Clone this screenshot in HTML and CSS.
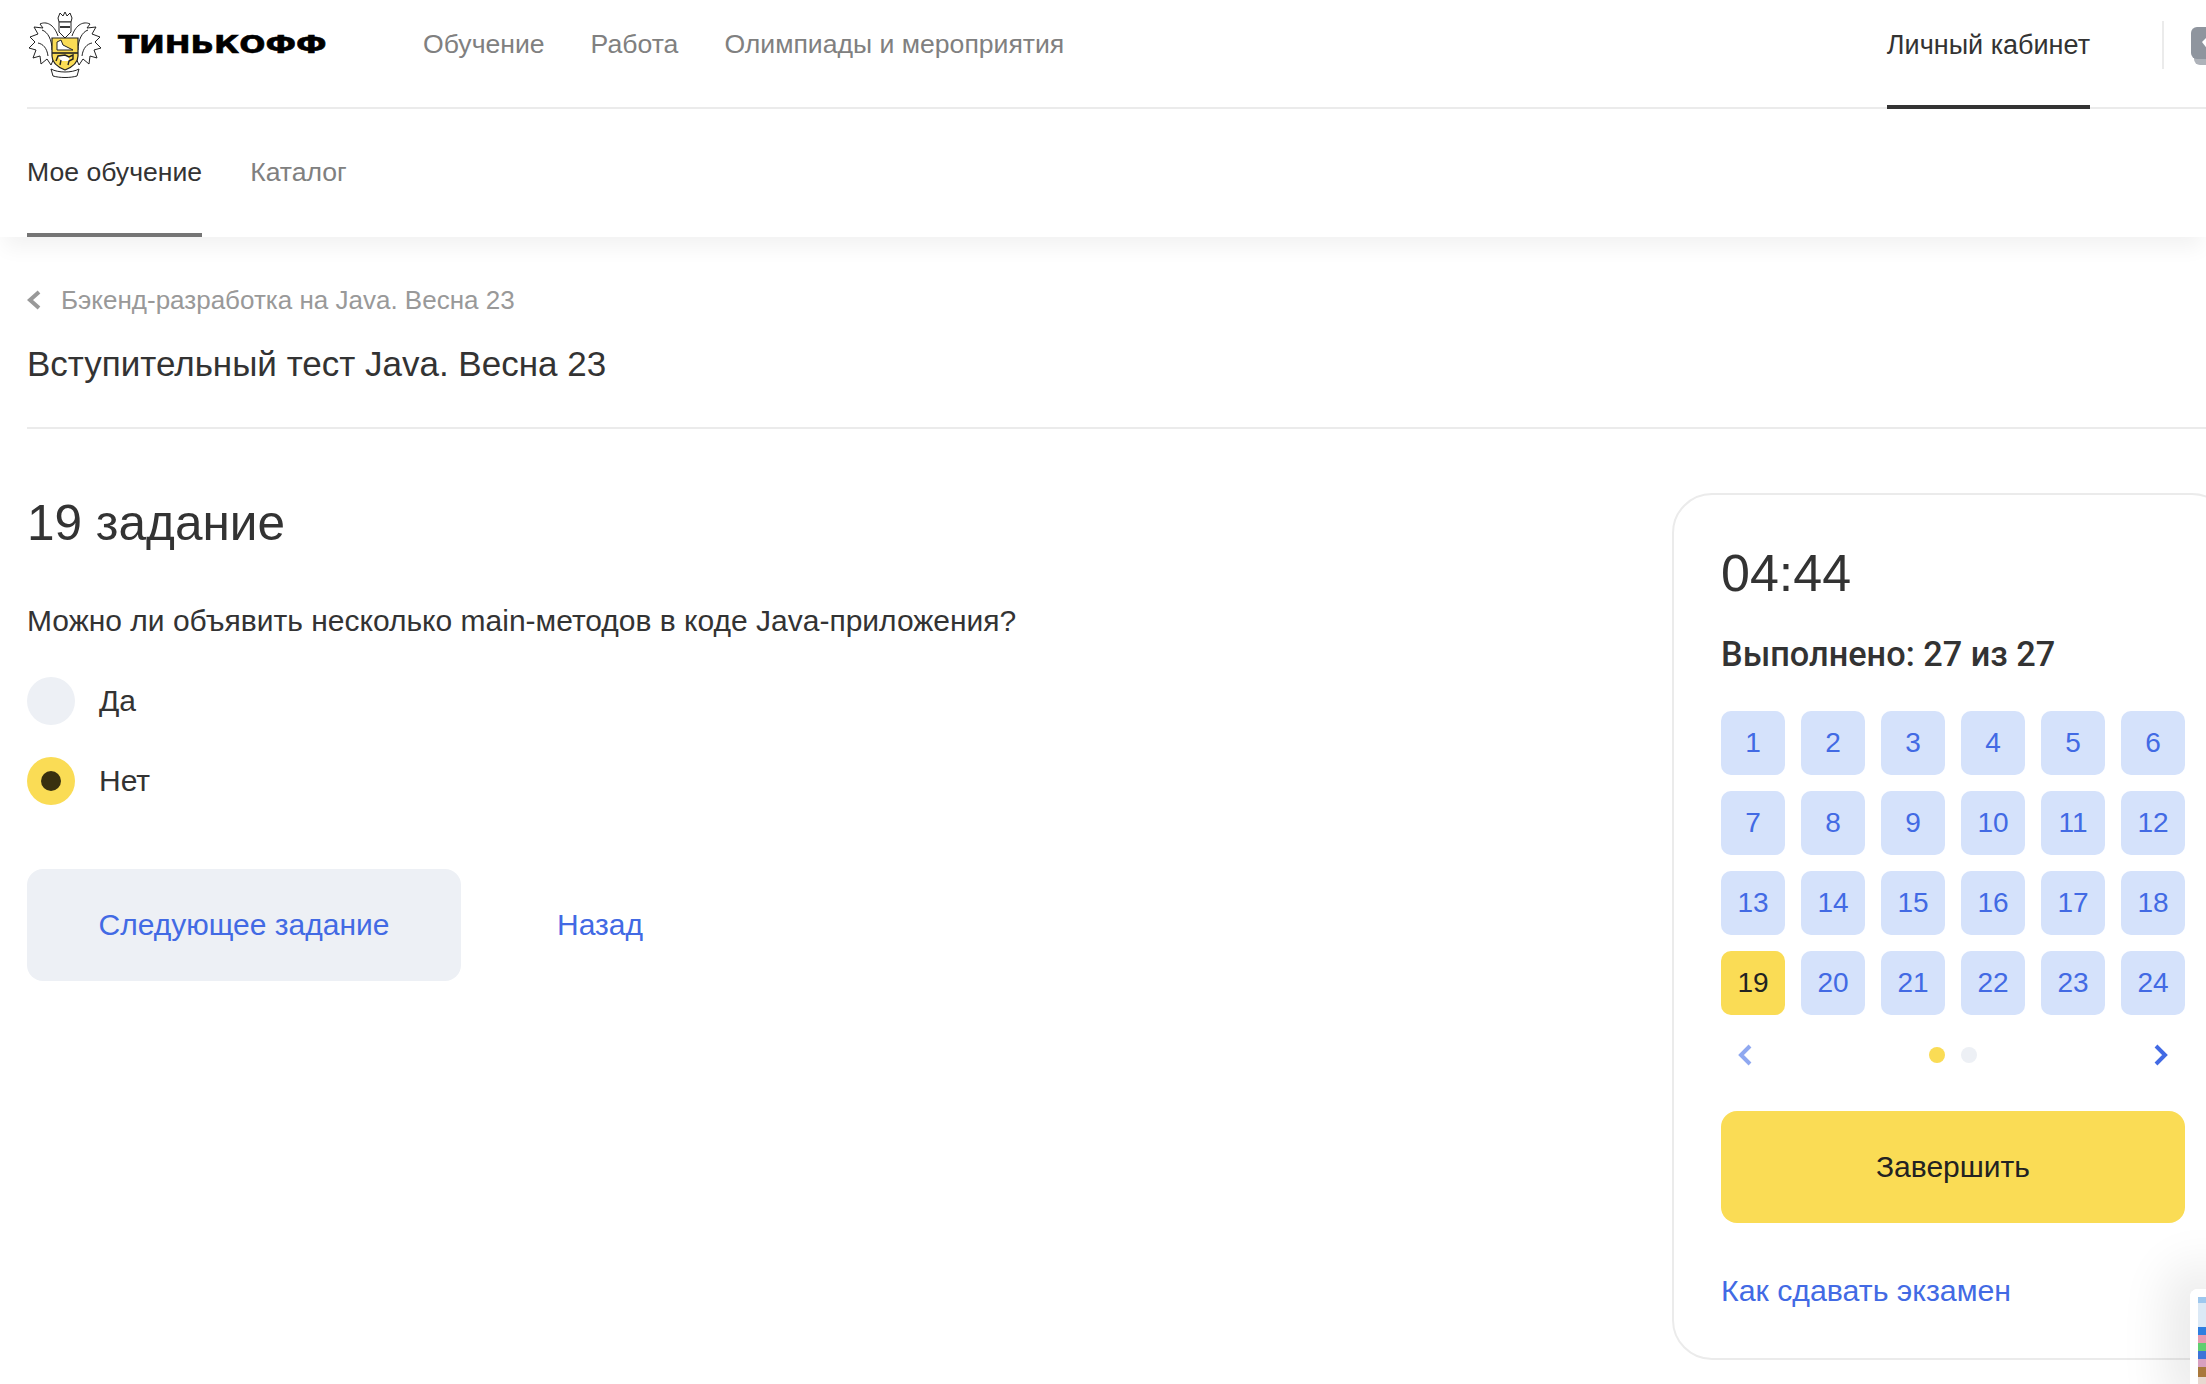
FILE: index.html
```html
<!DOCTYPE html>
<html lang="ru">
<head>
    <meta charset="UTF-8">
    <title>Вступительный тест Java. Весна 23</title>
    <link rel="stylesheet" href="styles.css">
</head>
<body>
    <header class="top-bar">
        <a class="logo" href="#">
            <svg class="logo-mark" viewBox="0 0 74 66" width="74" height="66">
                <g fill="#fff" stroke="#222" stroke-width="1">
                    <path d="M30 24 C26 12 18 9 12 12 L15 16 L6 15 L10 22 L2 25 L7 30 L1 36 L8 38 L5 46 L12 44 L13 52 L19 47 L23 53 L26 46"/>
                    <path d="M44 24 C48 12 56 9 62 12 L59 16 L68 15 L64 22 L72 25 L67 30 L73 36 L66 38 L69 46 L62 44 L61 52 L55 47 L51 53 L48 46"/>
                    <path d="M14 18 C20 20 24 28 24 38 M10 31 C15 32 19 36 20 44 M60 18 C54 20 50 28 50 38 M64 31 C59 32 55 36 54 44" fill="none"/>
                    <path d="M30 6 L32 1 L35 4 L37 0 L39 4 L42 1 L44 6 L43 10 L31 10 Z"/>
                    <path d="M31 10 H43 V20 L37 26 L31 20 Z"/>
                    <path d="M32 15 H42" fill="none" stroke-width="1.8"/>
                    <path d="M23 57 C30 61 44 61 51 57 L49 64 C42 66 32 66 25 64 Z"/>
                </g>
                <path d="M24 26 H50 V44 C50 52 42 56 37 58 C32 56 24 52 24 44 Z" fill="#fadc55" stroke="#222" stroke-width="1.2"/>
                <path d="M24 41 H50" stroke="#222" stroke-width="1.6"/>
                <path d="M29 38 L29 30 L33 28 L35 33 L45 38 Z" fill="#fff" stroke="#222"/>
                <path d="M30 44 L37 43 L41 45 L41 49 L33 49 Z" fill="#fff"/>
                <path d="M28 49 L30 44 L37 43 L41 45 L45 43 L45 47 L41 49 L40 53 M33 48 L32 53" fill="none" stroke="#222" stroke-width="1.4"/>
            </svg>
            <span class="logo-text">ТИНЬКОФФ</span>
        </a>
        <nav class="top-nav">
            <a href="#">Обучение</a>
            <a href="#">Работа</a>
            <a href="#">Олимпиады и мероприятия</a>
        </nav>
        <a class="cabinet-link" href="#">Личный кабинет</a>
        <div class="user-box">
            <svg viewBox="0 0 40 38" width="40" height="38">
                <path d="M3 30 H37 V32 A6 6 0 0 1 31 38 H9 A6 6 0 0 1 3 32 Z" fill="#aeb2b9"/>
                <rect width="40" height="32" rx="6" fill="#8f959e"/>
                <path d="M11 15 L18 8 L26 16 L18 24 Z" fill="#fff"/>
            </svg>
        </div>
    </header>

    <div class="sub-bar">
        <a class="sub-link active" href="#">Мое обучение</a>
        <a class="sub-link" href="#">Каталог</a>
    </div>

    <main class="page">
        <a class="breadcrumb" href="#">
            <svg viewBox="0 0 14 20" width="14" height="20"><path d="M12 2 L3 10 L12 18" fill="none" stroke="#999" stroke-width="4"/></svg>
            Бэкенд-разработка на Java. Весна 23
        </a>
        <h1 class="test-title">Вступительный тест Java. Весна 23</h1>

        <div class="content">
            <section class="task">
                <h2>19 задание</h2>
                <p class="question">Можно ли объявить несколько main-методов в коде Java-приложения?</p>
                <label class="option"><span class="radio"></span>Да</label>
                <label class="option"><span class="radio checked"></span>Нет</label>
                <div class="task-actions">
                    <button type="button" class="next-btn">Следующее задание</button>
                    <a class="back-link" href="#">Назад</a>
                </div>
            </section>

            <aside class="side-card">
                <div class="timer">04:44</div>
                <div class="progress">Выполнено: 27 из 27</div>
                <div class="task-grid">
                    <a href="#">1</a><a href="#">2</a><a href="#">3</a><a href="#">4</a><a href="#">5</a><a href="#">6</a>
                    <a href="#">7</a><a href="#">8</a><a href="#">9</a><a href="#">10</a><a href="#">11</a><a href="#">12</a>
                    <a href="#">13</a><a href="#">14</a><a href="#">15</a><a href="#">16</a><a href="#">17</a><a href="#">18</a>
                    <a href="#" class="current">19</a><a href="#">20</a><a href="#">21</a><a href="#">22</a><a href="#">23</a><a href="#">24</a>
                </div>
                <div class="pager">
                    <svg viewBox="0 0 14 22" width="14" height="22"><path d="M12 2 L3 11 L12 20" fill="none" stroke="#8fa8f0" stroke-width="4"/></svg>
                    <div class="dots"><span class="dot on"></span><span class="dot"></span></div>
                    <svg viewBox="0 0 14 22" width="14" height="22"><path d="M2 2 L11 11 L2 20" fill="none" stroke="#426ae4" stroke-width="4"/></svg>
                </div>
                <button type="button" class="finish-btn">Завершить</button>
                <a class="help-link" href="#">Как сдавать экзамен</a>
            </aside>
        </div>
    </main>

    <div class="thumb"></div>
</body>
</html>
```

FILE: styles.css
```css
* {
    box-sizing: border-box;
}

body {
    margin: 0;
    height: 1384px;
    overflow: hidden;
    position: relative;
    font-family: "Liberation Sans", Arial, sans-serif;
    font-size: 30px;
    color: #333;
    background: #fff;
}

a {
    text-decoration: none;
    color: inherit;
}

.top-bar {
    display: flex;
    align-items: center;
    height: 109px;
    margin-left: 27px;
    border-bottom: 2px solid #ebebeb;
}

.logo {
    display: flex;
    align-items: center;
    width: 396px;
    height: 88px;
    margin-bottom: 18px;
}

.logo-mark {
    flex: none;
    margin-left: 1px;
}

.logo-text {
    margin-left: 16px;
    font-family: "DejaVu Sans", sans-serif;
    font-weight: bold;
    font-size: 25px;
    color: #000;
    -webkit-text-stroke: 0.6px #000;
    transform: scaleX(1.233);
    transform-origin: left center;
}

.top-nav {
    display: flex;
    gap: 46px;
    flex: 1;
    margin-bottom: 18px;
    font-size: 26.6px;
    color: #808080;
}

.cabinet-link {
    align-self: stretch;
    display: flex;
    align-items: center;
    margin-bottom: -2px;
    padding-bottom: 14px;
    border-bottom: 4px solid #333;
    font-size: 27px;
}

.user-box {
    width: 44px;
    height: 48px;
    margin: 0 0 18px 72px;
    padding: 6px 0 0 27px;
    border-left: 2px solid #ebebeb;
    overflow: hidden;
}

.user-box svg {
    display: block;
}

.sub-bar {
    display: flex;
    gap: 48px;
    height: 128px;
    padding-left: 27px;
    font-size: 26.6px;
    color: #808080;
    box-shadow: 0 14px 20px -4px rgba(0, 0, 0, 0.055);
}

.sub-link {
    display: flex;
    align-items: center;
    padding-top: 2px;
    border-bottom: 4px solid transparent;
}

.sub-link.active {
    color: #333;
    border-bottom-color: #757575;
}

.page {
    padding: 47px 0 0 27px;
}

.breadcrumb {
    display: flex;
    align-items: center;
    gap: 20px;
    height: 32px;
    font-size: 26px;
    color: #999;
}

.test-title {
    margin: 0;
    padding: 24px 0 39px;
    border-bottom: 2px solid #ebebeb;
    font-size: 35px;
    line-height: 48px;
    font-weight: normal;
}

.content {
    display: flex;
    justify-content: space-between;
    padding-top: 64px;
}

.task h2 {
    margin: 0;
    font-size: 49.5px;
    line-height: 60px;
    font-weight: normal;
}

.question {
    margin: 48px 0 0;
    line-height: 40px;
}

.option {
    display: flex;
    align-items: center;
    gap: 24px;
    height: 48px;
    margin-top: 32px;
}

.question + .option {
    margin-top: 36px;
}

.radio {
    display: flex;
    align-items: center;
    justify-content: center;
    width: 48px;
    height: 48px;
    border-radius: 50%;
    background: #edf0f5;
}

.radio.checked {
    background: #fadc55;
}

.radio.checked::after {
    content: "";
    width: 20px;
    height: 20px;
    border-radius: 50%;
    background: #38300f;
}

.task-actions {
    display: flex;
    align-items: center;
    gap: 96px;
    margin-top: 64px;
}

button {
    border: none;
    border-radius: 16px;
    font: inherit;
    cursor: pointer;
}

.next-btn {
    width: 434px;
    height: 112px;
    background: #edf0f5;
    color: #426ae4;
}

.back-link {
    color: #426ae4;
}

.side-card {
    flex: none;
    width: 560px;
    height: 867px;
    margin-right: -26px;
    padding: 48px 0 0 47px;
    border: 2px solid #ebebeb;
    border-radius: 40px;
}

.timer {
    font-size: 52px;
    line-height: 60px;
}

.progress {
    margin-top: 31px;
    font-family: Roboto, "Liberation Sans", sans-serif;
    font-size: 34.3px;
    line-height: 40px;
    font-weight: 500;
}

.task-grid {
    display: grid;
    grid-template-columns: repeat(6, 64px);
    grid-auto-rows: 64px;
    gap: 16px;
    margin-top: 37px;
    font-size: 28px;
}

.task-grid a {
    display: flex;
    align-items: center;
    justify-content: center;
    border-radius: 10px;
    background: #d5e2fb;
    color: #426ae4;
}

.task-grid a.current {
    background: #fadc55;
    color: #222;
}

.pager {
    display: flex;
    align-items: center;
    justify-content: space-between;
    width: 464px;
    height: 48px;
    margin-top: 16px;
    padding: 0 17px;
}

.pager svg {
    display: block;
}

.dots {
    display: flex;
    gap: 16px;
    margin-left: -1px;
}

.dot {
    width: 16px;
    height: 16px;
    border-radius: 50%;
    background: #edf0f5;
}

.dot.on {
    background: #fadc55;
}

.finish-btn {
    display: block;
    width: 464px;
    height: 112px;
    margin-top: 32px;
    background: #fadc55;
    color: #222;
}

.help-link {
    display: block;
    margin-top: 51px;
    font-size: 30.3px;
    line-height: 34px;
    color: #426ae4;
}

.thumb {
    position: absolute;
    right: 0;
    bottom: 0;
    width: 16px;
    height: 95px;
    border-radius: 8px 0 0 0;
    border: solid #fff;
    border-width: 8px 0 0 8px;
    background: linear-gradient(#9ec8ee 0, #9ec8ee 6px, #dbe9f6 6px, #dbe9f6 30px, #2f7fe0 30px, #2f7fe0 38px, #e69ab0 38px, #e69ab0 46px, #5fcf70 46px, #5fcf70 54px, #3c74d8 54px, #3c74d8 62px, #d8a0c0 62px, #d8a0c0 70px, #a9783c 70px, #a9783c 80px, #e8d8d0 80px);
    box-shadow: 0 0 50px 22px rgba(0, 0, 0, 0.09);
}
```
